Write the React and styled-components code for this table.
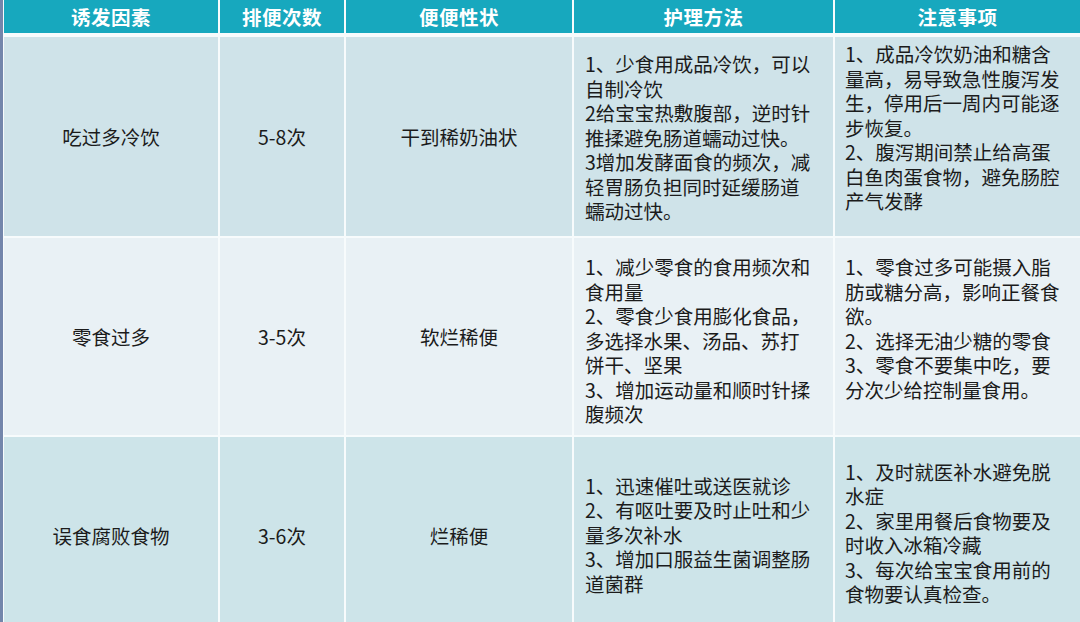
import styled, { createGlobalStyle } from "styled-components";

const GlobalStyle = createGlobalStyle`
  html, body {
    margin: 0;
    padding: 0;
    background: #ffffff;
    overflow: hidden;
  }
  body {
    font-family: "Noto Sans CJK SC", "Noto Sans", sans-serif;
  }
`;

const headers = ["诱发因素", "排便次数", "便便性状", "护理方法", "注意事项"];

// 每一行的内容，护理方法和注意事项按原图逐行拆开
const rows = [
  {
    bg: "#cfe3e9",
    height: 199,
    cause: "吃过多冷饮",
    times: "5-8次",
    shape: "干到稀奶油状",
    care: [
      "1、少食用成品冷饮，可以",
      "自制冷饮",
      "2给宝宝热敷腹部，逆时针",
      "推揉避免肠道蠕动过快。",
      "3增加发酵面食的频次，减",
      "轻胃肠负担同时延缓肠道",
      "蠕动过快。",
    ],
    careAlign: { top: 3, bottom: 0 },
    notes: [
      "1、成品冷饮奶油和糖含",
      "量高，易导致急性腹泻发",
      "生，停用后一周内可能逐",
      "步恢复。",
      "2、腹泻期间禁止给高蛋",
      "白鱼肉蛋食物，避免肠腔",
      "产气发酵",
    ],
    notesAlign: { top: 0, bottom: 17 },
  },
  {
    bg: "#e9f1f5",
    height: 197,
    cause: "零食过多",
    times: "3-5次",
    shape: "软烂稀便",
    care: [
      "1、减少零食的食用频次和",
      "食用量",
      "2、零食少食用膨化食品，",
      "多选择水果、汤品、苏打",
      "饼干、坚果",
      "3、增加运动量和顺时针揉",
      "腹频次",
    ],
    careAlign: { top: 17, bottom: 0, start: true },
    notes: [
      "1、零食过多可能摄入脂",
      "肪或糖分高，影响正餐食",
      "欲。",
      "2、选择无油少糖的零食",
      "3、零食不要集中吃，要",
      "分次少给控制量食用。",
    ],
    notesAlign: { top: 17, bottom: 0, start: true },
  },
  {
    bg: "#cde4e9",
    height: 196,
    cause: "误食腐败食物",
    times: "3-6次",
    shape: "烂稀便",
    care: [
      "1、迅速催吐或送医就诊",
      "2、有呕吐要及时止吐和少",
      "量多次补水",
      "3、增加口服益生菌调整肠",
      "道菌群",
    ],
    careAlign: { top: 0, bottom: 0 },
    notes: [
      "1、及时就医补水避免脱",
      "水症",
      "2、家里用餐后食物要及",
      "时收入冰箱冷藏",
      "3、每次给宝宝食用前的",
      "食物要认真检查。",
    ],
    notesAlign: { top: 0, bottom: 4 },
  },
];

export default function App() {
  return (
    <>
      <GlobalStyle />
      <Page>
        <Table>
          {headers.map((h) => (
            <HeadCell key={h}>{h}</HeadCell>
          ))}
          {rows.map((r) => (
            <Row key={r.cause} $bg={r.bg} $height={r.height}>
              <CenterCell>{r.cause}</CenterCell>
              <CenterCell>{r.times}</CenterCell>
              <CenterCell>{r.shape}</CenterCell>
              <TextCell
                $pad={11}
                $top={r.careAlign.top}
                $bottom={r.careAlign.bottom}
                $start={r.careAlign.start}
              >
                <Lines>{r.care.join("\n")}</Lines>
              </TextCell>
              <TextCell
                $pad={10}
                $top={r.notesAlign.top}
                $bottom={r.notesAlign.bottom}
                $start={r.notesAlign.start}
              >
                <Lines>{r.notes.join("\n")}</Lines>
              </TextCell>
            </Row>
          ))}
        </Table>
      </Page>
    </>
  );
}

const Page = styled.div`
  width: 1080px;
  height: 622px;
  overflow: hidden;
  border-left: 3px solid #7386ab;
  box-sizing: border-box;
  background: #ffffff;
`;

const Table = styled.div`
  display: grid;
  grid-template-columns: 214px 124px 226px 259px 245px;
  column-gap: 2px;
  row-gap: 2px;
  padding-left: 1px;
  background: #f7fbfc;
`;

const HeadCell = styled.div`
  height: 33px;
  margin-bottom: 2px;
  background: #17a8be;
  color: #ffffff;
  font-weight: 700;
  font-size: 19.5px;
  display: flex;
  align-items: center;
  justify-content: center;
  letter-spacing: 0.5px;
`;

const Row = styled.div`
  display: contents;

  & > div {
    background: ${(p) => p.$bg};
    height: ${(p) => p.$height}px;
  }
`;

const CenterCell = styled.div`
  display: flex;
  align-items: center;
  justify-content: center;
  font-size: 19.5px;
  color: #1b1b1b;
`;

const TextCell = styled.div`
  display: flex;
  flex-direction: column;
  justify-content: ${(p) => (p.$start ? "flex-start" : "center")};
  box-sizing: border-box;
  padding: ${(p) => p.$top}px 4px ${(p) => p.$bottom}px ${(p) => p.$pad}px;
  font-size: 19.5px;
  line-height: 24.5px;
  color: #1b1b1b;
`;

const Lines = styled.p`
  margin: 0;
  white-space: pre;
`;
